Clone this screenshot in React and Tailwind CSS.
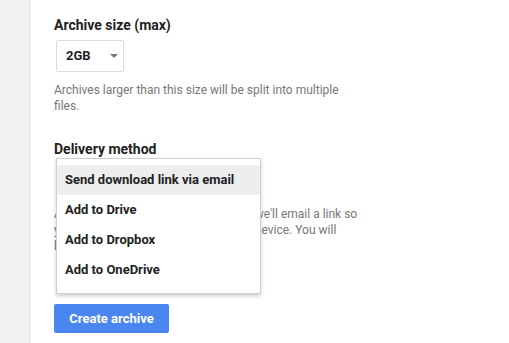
import React from 'react';

const options = [
  'Send download link via email',
  'Add to Drive',
  'Add to Dropbox',
  'Add to OneDrive',
];

const SizeSelect = ({ value }) => (
  <div className="ml-[2px] mt-[5px] flex h-[32px] w-[68px] items-center justify-between rounded-[2px] border border-[#dcdcdc] bg-white pl-[9px] pr-[5px]">
    <span className="text-[13px] font-bold text-[#222]">{value}</span>
    <span className="h-0 w-0 border-x-[4px] border-t-[4px] border-x-transparent border-t-[#777]" />
  </div>
);

// the open select: its list sits over the help text below it
const DeliveryMenu = () => (
  <div className="absolute left-[2px] top-[19px] z-10 w-[205px] border border-[#cfcfcf] bg-white pb-[8px] pt-[6px] shadow-[0_2px_4px_rgba(0,0,0,0.2)]">
    {options.map((opt, i) => (
      <div
        key={opt}
        className={`flex h-[30px] items-center pl-[8px] text-[13px] font-bold text-[#222] ${i === 0 ? 'bg-[#eeeeee]' : ''}`}
      >
        {opt}
      </div>
    ))}
  </div>
);

export default function App() {
  return (
    <div className="flex h-[343px] w-[509px] overflow-hidden bg-white font-['Roboto',sans-serif]">
      <div className="w-[30px] shrink-0 border-r border-[#e4e4e4] bg-[#f2f2f2] shadow-[1px_0_2px_rgba(0,0,0,0.05)]" />
      <div className="flex flex-col pl-[24px] pt-[15px]">
        <h3 className="text-[14px] font-bold leading-[20px] text-[#222]">Archive size (max)</h3>
        <SizeSelect value="2GB" />
        <p className="mt-[10px] text-[12px] leading-[16px] text-[#777]">
          Archives larger than this size will be split into multiple
          <br />
          files.
        </p>

        <div className="relative mt-[25px]">
          <h3 className="text-[14px] font-bold leading-[20px] text-[#222]">Delivery method</h3>
          <div className="mt-[5px] h-[32px]" />
          <p className="mt-[10px] whitespace-nowrap text-[12px] leading-[16px] text-[#777]">
            As soon as your new archive is ready, we'll email a link so
            <br />
            you can download the archive to your device. You will
            <br />
            be able to download it for a week.
          </p>
          <DeliveryMenu />
        </div>

        <button className="mt-[50px] h-[29px] w-[115px] rounded-[2px] bg-[#4a86f0] text-[13px] font-bold text-white">
          Create archive
        </button>
      </div>
    </div>
  );
}
